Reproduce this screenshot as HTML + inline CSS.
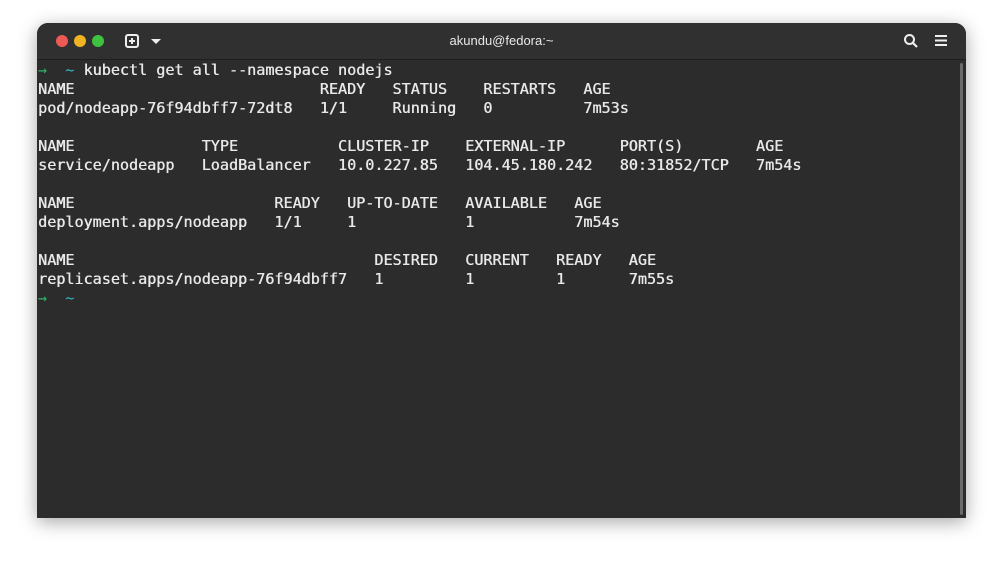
<!DOCTYPE html>
<html><head><style>
html,body{margin:0;padding:0;background:#fff;width:1003px;height:568px;overflow:hidden}
.win{position:absolute;left:37px;top:23px;width:929px;height:495px;background:#2c2c2c;border-radius:11px 11px 0 0;box-shadow:0 4px 18px rgba(0,0,0,.35);overflow:hidden}
.hdr{position:absolute;left:0;top:0;right:0;height:36px;background:#303030;border-bottom:1px solid #1e1e1e}
.dot{position:absolute;top:12px;width:12px;height:12px;border-radius:50%}
.title{position:absolute;left:0;right:0;top:10px;text-align:center;color:#e8e8e8;font:13px "Liberation Sans",sans-serif}
pre{position:absolute;left:1px;top:38px;margin:0;font:15.1px/19px "DejaVu Sans Mono","Liberation Mono",monospace;color:#e8e8e8;text-shadow:0.4px 0 0 #e8e8e8}
.g{color:#2fb56a;text-shadow:none}.c{color:#37b4c4;text-shadow:none}
.sb{position:absolute;right:3px;top:40px;width:3px;height:452px;background:#6a6a6a;border-radius:2px}
</style></head><body>
<div class="win">
<div class="hdr">
<div class="dot" style="left:19px;background:#ed5a55"></div>
<div class="dot" style="left:37px;background:#f0b323"></div>
<div class="dot" style="left:55px;background:#3fc23f"></div>
<svg style="position:absolute;left:88px;top:11px" width="40" height="14"><rect x="1" y="1" width="12" height="12" rx="2" fill="none" stroke="#eee" stroke-width="2"/><path d="M7 4v6M4 7h6" stroke="#eee" stroke-width="2"/><path d="M26 5h10l-5 5z" fill="#eee"/></svg>
<div class="title">akundu@fedora:~</div>
<svg style="position:absolute;left:866px;top:10px" width="16" height="16"><circle cx="6.5" cy="6.5" r="4.5" fill="none" stroke="#eee" stroke-width="2"/><path d="M10 10l4 4" stroke="#eee" stroke-width="2.2"/></svg>
<svg style="position:absolute;left:897px;top:11px" width="14" height="14"><path d="M1 2h12M1 6.5h12M1 11h12" stroke="#eee" stroke-width="2"/></svg>
</div>
<pre><span class="g">→</span>  <span class="c">~</span> kubectl get all --namespace nodejs
NAME                           READY   STATUS    RESTARTS   AGE
pod/nodeapp-76f94dbff7-72dt8   1/1     Running   0          7m53s

NAME              TYPE           CLUSTER-IP    EXTERNAL-IP      PORT(S)        AGE
service/nodeapp   LoadBalancer   10.0.227.85   104.45.180.242   80:31852/TCP   7m54s

NAME                      READY   UP-TO-DATE   AVAILABLE   AGE
deployment.apps/nodeapp   1/1     1            1           7m54s

NAME                                 DESIRED   CURRENT   READY   AGE
replicaset.apps/nodeapp-76f94dbff7   1         1         1       7m55s
<span class="g">→</span>  <span class="c">~</span></pre>
<div class="sb"></div>
</div>
</body></html>
